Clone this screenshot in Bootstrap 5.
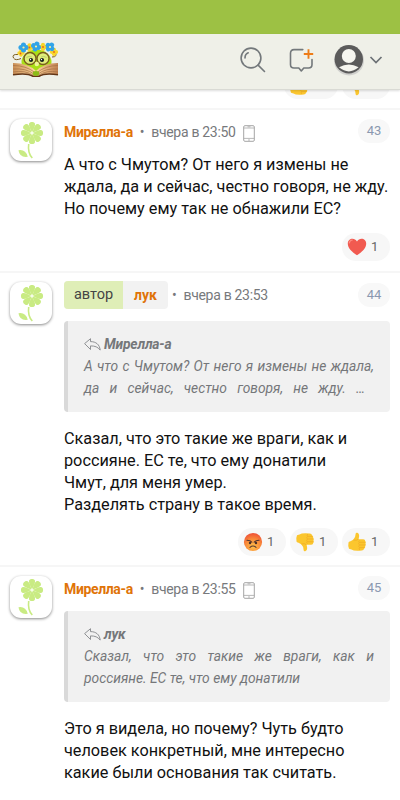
<!DOCTYPE html>
<html lang="ru">
<head>
<meta charset="utf-8">
<meta name="viewport" content="width=device-width, initial-scale=1">
<title>Обсуждение</title>
<link href="https://cdn.jsdelivr.net/npm/bootstrap@5.3.0/dist/css/bootstrap.min.css" rel="stylesheet">
<style>
body{font-family:Roboto,"Noto Sans",sans-serif;font-size:16px;line-height:22px;color:#111;background:#fff;height:800px;overflow:hidden}
svg{display:block;flex:none}
.status-strip{height:34px;background:#9dc144}
.top-bar{height:56px;background:#eff0e8;border-bottom:1px solid #d9dad4;box-shadow:0 1px 2px #0002;padding:0 17px 3px 12px}
.feed{padding-top:72px}
.post{border-top:2px solid #f6f6f6;padding:9px 10px 9px}
.avatar-tile{width:42px;height:42px;border-radius:11px;background:#fff;box-shadow:0 1px 3px #0007}
.post-head{height:28px;margin-top:-1px}
.post-head>.num{margin-bottom:2px}
.nick{color:#e07408;font-weight:700;font-size:14px;letter-spacing:-.36px}
.when{color:#77797c;font-size:14px;letter-spacing:-.3px}
.num{width:32px;height:24px;border-radius:12px;background:#f8f8f8;color:#8b98b0;font-size:13px}
.msg{white-space:nowrap;font-size:16.25px}
.reaction{height:28px;width:48px;border-radius:14px;background:#f7f7f7;color:#666;font-size:13px;padding-left:5px;gap:4px}
.tag-group{height:28px;border-radius:4px;overflow:hidden;background:#f2f2f2}
.tag-author{background:#dfeeb7;color:#444;width:59px;font-size:14.5px}
.tag-nick{width:45px;letter-spacing:0}
.quote{height:91px;background:#f1f1f1;border-left:4px solid #d9d9d9;border-radius:4px;padding:12px 16px;color:#75777a;font-style:italic;font-size:13.8px;white-space:nowrap}
.quote b{letter-spacing:-.15px}
.spread{text-align:justify;text-align-last:justify;white-space:normal}
</style>
<script src="https://cdn.jsdelivr.net/npm/bootstrap@5.3.0/dist/js/bootstrap.bundle.min.js"></script>
</head>
<body>
<svg width="0" height="0" class="position-absolute">
<defs>
<symbol id="flower" viewBox="0 0 42 42"><g fill="#c9eb83">
<path id="pt" d="M22 13.200C20.300 10.500 18.600 7 19 4.800C19.500 2.300 24.500 2.300 25 4.800C25.400 7 23.700 10.500 22 13.200Z"/><use href="#pt" transform="rotate(45 22 14)"/><use href="#pt" transform="rotate(90 22 14)"/><use href="#pt" transform="rotate(135 22 14)"/><use href="#pt" transform="rotate(180 22 14)"/><use href="#pt" transform="rotate(225 22 14)"/><use href="#pt" transform="rotate(270 22 14)"/><use href="#pt" transform="rotate(315 22 14)"/>
<path d="M8.500 31.300Q15.500 30 17.800 37.800Q9.500 39 8.500 31.300Z"/></g><path d="M18.700 25Q17.500 34 22.300 39" fill="none" stroke="#c9eb83" stroke-width="1.600"/></symbol>
<symbol id="phone" viewBox="0 0 12 17"><rect x=".7" y=".7" width="10.600" height="15.600" rx="1.200" fill="none" stroke="#a6a6a6"/><path d="M.7 3H11.300M.7 13.400H11.300M4.500 1.800h3M5 15h2" stroke="#a6a6a6" stroke-width=".8"/></symbol>
<symbol id="reply" viewBox="0 0 17 13"><path d="M.6 5.600L6.500.7V3.600C12 3.600 15.600 6.500 16.200 12.100C13.800 8.900 11 7.900 6.500 7.900V11.500Z" fill="none" stroke="#85878a" stroke-width=".9" stroke-linejoin="round"/></symbol>
<symbol id="thumb" viewBox="0 0 20 20"><path d="M1.500 10.500Q1.600 9.400 3.500 9.200L6.200 7.800Q8.600 5.600 8.600 2Q8.700.5 10.200.8C12.700 1.400 12.400 4.800 11.500 7.200H16.200Q18.300 7.300 18.200 9Q19.300 10 18.500 11.600Q19.200 13 18.200 14.200Q18.500 16 17 16.700Q16.800 18.300 14.800 18.400Q7 19.300 4.500 17.400L2 16.800Q.8 14 1.500 10.500Z" fill="#fbc62e"/><path d="M12.500 10.300h5.800M12.800 13h5.500M12.600 15.600h4.700M6.300 8Q9.500 9 11.500 7.200M12.500 8.500Q11 9.200 12.300 10.300Q11 11.500 12.500 13Q11 14.300 12.500 15.600Q11.500 17 12.800 18" fill="none" stroke="#eda623" stroke-width=".6"/></symbol>
<symbol id="heart" viewBox="0 0 20 20"><path d="M10 18.200C5 15.200.8 11 .8 6.800C.8 1.200 7.500.2 10 4.500C12.500.2 19.200 1.200 19.200 6.800C19.200 11 15 15.200 10 18.200Z" fill="#f15a50"/><path d="M2.200 6Q3 3 5.300 3" stroke="#ff8b80" stroke-width="1.200" fill="none" stroke-linecap="round"/></symbol>
<radialGradient id="hot" cy=".75" r=".75"><stop stop-color="#ffc04a"/><stop offset=".55" stop-color="#f98b39"/><stop offset="1" stop-color="#ee4f37"/></radialGradient>
<symbol id="angry" viewBox="0 0 20 20"><circle cx="10" cy="10" r="9.100" fill="url(#hot)"/><path d="M4 8.300Q7.400 8.400 8.800 10.200M16 8.300Q12.600 8.400 11.200 10.200M7 15.300Q10 12.800 13 15.300" fill="none" stroke="#56362f" stroke-width="1.100" stroke-linecap="round"/><circle cx="7" cy="11" r="1.200" fill="#493029"/><circle cx="13" cy="11" r="1.200" fill="#493029"/></symbol>
<linearGradient id="page"><stop stop-color="#c88d55"/><stop offset=".5" stop-color="#ffd9a0"/><stop offset="1" stop-color="#c08050"/></linearGradient>
<g id="blossom"><circle cx="0" cy="-2.300" r="2.300"/><circle cx="2.300" cy="0" r="2.300"/><circle cx="0" cy="2.300" r="2.300"/><circle cx="-2.300" cy="0" r="2.300"/></g>
</defs></svg>

<header class="fixed-top">
<div class="status-strip"></div>
<nav class="top-bar d-flex align-items-center">
<svg width="48" height="38" viewBox="0 0 48 38">
<ellipse cx="24.500" cy="21" rx="15" ry="12.500" fill="#a9df16"/>
<path d="M6 13.500Q-.5 13 1.500 17Q3.500 20 9 17.500M40 16Q46 16 43 11" fill="none" stroke="#795c1e" stroke-width="1"/>
<g fill="#f9d629"><use href="#blossom" transform="translate(9 12) scale(.8)"/><use href="#blossom" transform="translate(17.500 6.500) scale(.9)"/><use href="#blossom" transform="translate(31 6) scale(.9)"/><use href="#blossom" transform="translate(42 11) scale(.9)"/></g>
<g fill="#31a4e8"><use href="#blossom" transform="translate(11.500 6.500) scale(1.100)"/><use href="#blossom" transform="translate(24 5.500) rotate(20) scale(1.100)"/><use href="#blossom" transform="translate(38 6) rotate(40) scale(1.100)"/></g>
<g fill="#fff29b"><circle cx="11.500" cy="6.500" r="1.100"/><circle cx="24" cy="5.500" r="1.100"/><circle cx="38" cy="6" r="1.100"/></g><g fill="#e95b21"><circle cx="8.500" cy="12.500" r=".9"/><circle cx="17.500" cy="6.500" r=".9"/><circle cx="31" cy="6" r=".9"/><circle cx="42" cy="11" r=".9"/></g>
<g fill="#e0ed7a" stroke="#795c1e" stroke-width="1.400"><circle cx="18" cy="17.500" r="6"/><circle cx="31" cy="17.500" r="6"/></g>
<path d="M14.500 16.500Q17 14.500 20 16M29 16Q31.500 14.500 34.500 16.500" fill="none" stroke="#b0c766" stroke-width=".8"/><circle cx="19" cy="19" r="2.100" fill="#16201c"/><circle cx="30" cy="19" r="2.100" fill="#16201c"/><circle cx="18.500" cy="18.500" r=".7" fill="#fff"/><circle cx="29.500" cy="18.500" r=".7" fill="#fff"/><circle cx="24.800" cy="23" r="2.200" fill="#f0f59a"/>
<path d="M1 34V22Q16 22 24 30Q32 22 46 22V34Q32 31 27 35H21Q16 31 1 34Z" fill="url(#page)"/>
<path d="M1 24.500Q14 24.500 23 31.500M1 28Q14 27 22 33M1 31Q13 29 21 34M46 24.500Q34 24.500 25 31.500M46 28Q34 27 26 33M46 31Q35 29 27 34" fill="none" stroke="#a46e43" stroke-width=".7"/>
<path d="M1 33.800Q15 31.500 21 35.300H27Q33 31.500 46 33.800" fill="none" stroke="#633617" stroke-width="1.600"/><ellipse cx="24" cy="32.500" rx="3.200" ry="2.400" fill="#8bbb17"/>
</svg>
<svg class="ms-auto" width="26" height="26" viewBox="0 0 26 26" fill="none" stroke="#73787b" stroke-width="1.600" stroke-linecap="round"><circle cx="11" cy="11" r="9.900"/><path d="M18.100 18.100L24.500 24.500M5 11Q5 7 8.200 5.800"/></svg>
<svg style="margin-left:23px" width="26" height="26" viewBox="0 0 26 26" fill="none" stroke="#73787b" stroke-width="1.600" stroke-linecap="round" stroke-linejoin="round"><path d="M13.800 2.600H5Q1.500 2.600 1.500 6.200V17.500Q1.500 21 5 21H9.800L12.300 24L14.800 21H19.500Q23 21 23 17.500V12.500"/><path d="M19.500 2.300V11.700M14.800 7H24.200" stroke="#ed7c17" stroke-width="1.900" stroke-linecap="butt"/></svg>
<svg style="margin-left:18px" width="32" height="32" viewBox="0 0 32 32"><circle cx="16" cy="16.500" r="15" fill="#bbb" opacity=".6"/><circle cx="15.800" cy="15.300" r="14.200" fill="#5b5b5b"/><circle cx="15.800" cy="12" r="7" fill="#f5f5ef"/><path d="M6 23.300Q15.800 17.500 25.600 23.300Q15.800 31.500 6 23.300Z" fill="#f5f5ef"/></svg>
<svg style="margin-left:4px" width="14" height="10" viewBox="0 0 14 10" fill="none" stroke="#6c7175" stroke-width="1.700"><path d="M1.500 2L7 7.500L12.500 2"/></svg>
</nav>
</header>

<main class="feed">
<div class="d-flex justify-content-end" style="gap:4px;padding:0 10px 9px 0">
<div class="reaction d-flex align-items-center" style="width:54px;height:27px"><svg width="20" height="20"><use href="#thumb"/></svg><span>10</span></div>
<div class="reaction d-flex align-items-center" style="height:27px"><svg width="20" height="20"><use href="#thumb" transform="matrix(1 0 0 -1 0 20)"/></svg><span>2</span></div>
</div>

<article class="post d-flex align-items-start" id="p43" style="padding-bottom:10px">
<div class="avatar-tile flex-shrink-0"><svg width="42" height="42"><use href="#flower"/></svg></div>
<div class="flex-grow-1" style="margin-left:12px">
<div class="post-head d-flex align-items-center"><span class="nick">Мирелла-а</span><span class="when" style="margin:0 7px">•</span><span class="when">вчера в 23:50</span><svg width="12" height="17" style="margin:2px 0 0 7px"><use href="#phone"/></svg><span class="num ms-auto d-flex align-items-center justify-content-center">43</span></div>
<div class="msg" style="margin-top:8px">А что с Чмутом? От него я измены не<br>ждала, да и сейчас, честно говоря, не жду.<br>Но почему ему так не обнажили ЕС?</div>
<div class="d-flex justify-content-end" style="margin-top:13px"><div class="reaction d-flex align-items-center"><svg width="20" height="20"><use href="#heart"/></svg><span>1</span></div></div>
</div></article>

<article class="post d-flex align-items-start" id="p44">
<div class="avatar-tile flex-shrink-0"><svg width="42" height="42"><use href="#flower"/></svg></div>
<div class="flex-grow-1" style="margin-left:12px">
<div class="post-head d-flex align-items-center"><div class="tag-group d-flex"><span class="tag-author d-flex align-items-center justify-content-center">автор</span><span class="tag-nick nick d-flex align-items-center justify-content-center">лук</span></div><span class="when" style="margin:0 7px 0 4px">•</span><span class="when">вчера в 23:53</span><span class="num ms-auto mb-0 d-flex align-items-center justify-content-center">44</span></div>
<div class="quote" style="margin-top:12px"><div class="d-flex align-items-center"><svg width="17" height="13" style="margin-right:3px"><use href="#reply"/></svg><b>Мирелла-а</b></div><div class="spread">А что с Чмутом? От него я измены не ждала,</div><div class="spread" style="padding-right:9px">да и сейчас, честно говоря, не жду. …</div></div>
<div class="msg" style="margin-top:16px">Сказал, что это такие же враги, как и<br>россияне. ЕС те, что ему донатили<br>Чмут, для меня умер.<br>Разделять страну в такое время.</div>
<div class="d-flex justify-content-end" style="margin-top:12px;gap:4px">
<div class="reaction d-flex align-items-center"><svg width="20" height="20"><use href="#angry"/></svg><span>1</span></div>
<div class="reaction d-flex align-items-center"><svg width="20" height="20"><use href="#thumb" transform="matrix(1 0 0 -1 0 20)"/></svg><span>1</span></div>
<div class="reaction d-flex align-items-center"><svg width="20" height="20"><use href="#thumb"/></svg><span>1</span></div></div>
</div></article>

<article class="post d-flex align-items-start" id="p45">
<div class="avatar-tile flex-shrink-0"><svg width="42" height="42"><use href="#flower"/></svg></div>
<div class="flex-grow-1" style="margin-left:12px">
<div class="post-head d-flex align-items-center"><span class="nick">Мирелла-а</span><span class="when" style="margin:0 7px">•</span><span class="when">вчера в 23:55</span><svg width="12" height="17" style="margin:2px 0 0 7px"><use href="#phone"/></svg><span class="num ms-auto d-flex align-items-center justify-content-center">45</span></div>
<div class="quote" style="margin-top:8px"><div class="d-flex align-items-center"><svg width="17" height="13" style="margin-right:3px"><use href="#reply"/></svg><b>лук</b></div><div class="spread">Сказал, что это такие же враги, как и</div><div>россияне. ЕС те, что ему донатили</div></div>
<div class="msg" style="margin-top:16px">Это я видела, но почему? Чуть будто<br>человек конкретный, мне интересно<br>какие были основания так считать.</div>
</div></article>
</main>
</body>
</html>
